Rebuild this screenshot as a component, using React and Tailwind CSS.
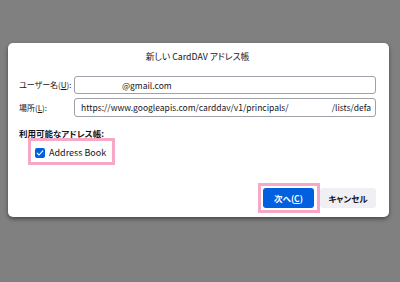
export default function App() {
  const font = { fontFamily: '"Noto Sans CJK JP", "Noto Sans", sans-serif' };
  return (
    <div className="w-[400px] h-[282px] bg-[#808080] pt-[43px] px-[8px] [font-feature-settings:'palt']" style={font}>
      <div className="w-[381px] h-[174px] bg-white rounded-[5px] shadow-[0_2px_4px_rgba(0,0,0,0.45)] pl-[11px] pr-[13px] pt-[6px] text-[#15141a] text-[8.5px]">
        {/* title */}
        <div className="h-[16px] flex items-center justify-center text-[8.8px] whitespace-nowrap">新しい CardDAV アドレス帳</div>

        {/* fields */}
        <div className="mt-[11px] flex flex-col gap-[4px]">
          <div className="flex items-center">
            <label className="w-[55px] shrink-0 whitespace-nowrap text-[8px]">
              ユーザー名(<span className="underline">U</span>):
            </label>
            <div className="flex-1 min-w-0 h-[18px] border border-[#a0a0a8] rounded-[3px] flex items-center pl-[47px] overflow-hidden whitespace-nowrap">
              @gmail.com
            </div>
          </div>
          <div className="flex items-center">
            <label className="w-[55px] shrink-0 whitespace-nowrap text-[8px]">
              場所(<span className="underline">L</span>):
            </label>
            <div className="flex-1 min-w-0 h-[19px] border border-[#a0a0a8] rounded-[3px] flex items-center pl-[6px] pr-[4px] whitespace-nowrap">
              <span>https://www.googleapis.com/carddav/v1/principals/</span>
              <span className="ml-auto">/lists/defa</span>
            </div>
          </div>
        </div>

        {/* available address books */}
        <div className="mt-[10px] font-semibold leading-[12px]">利用可能なアドレス帳:</div>
        <div className="relative mt-[4px] ml-[16px] w-fit flex items-center gap-[4px] h-[20px]">
          <span className="absolute -left-[7px] -right-[9px] -top-[5px] -bottom-[2px] border-[3px] border-[#f5a9c6] pointer-events-none" />
          <span className="w-[10px] h-[10px] rounded-[2px] bg-[#0060df] flex items-center justify-center">
            <svg width="8" height="8" viewBox="0 0 8 8" fill="none">
              <path d="M1.2 4.2 L3.1 6 L6.8 1.8" stroke="white" strokeWidth="1.1" strokeLinecap="round" strokeLinejoin="round" />
            </svg>
          </span>
          <span className="text-[9px]">Address Book</span>
        </div>

        {/* buttons */}
        <div className="mt-[25px] flex justify-end gap-[6px]">
          <div className="relative">
            <span className="absolute -left-[5px] -right-[6px] -top-[5px] -bottom-[5px] border-[3px] border-[#f5a9c6] pointer-events-none" />
            <button className="w-[51px] h-[20px] rounded-[3px] bg-[#0060df] text-white font-semibold flex items-center justify-center">
              次へ(<span className="underline">C</span>)
            </button>
          </div>
          <button className="w-[56px] h-[20px] rounded-[3px] bg-[#f0f0f4] text-[#15141a] font-semibold flex items-center justify-center">
            キャンセル
          </button>
        </div>
      </div>
    </div>
  );
}
